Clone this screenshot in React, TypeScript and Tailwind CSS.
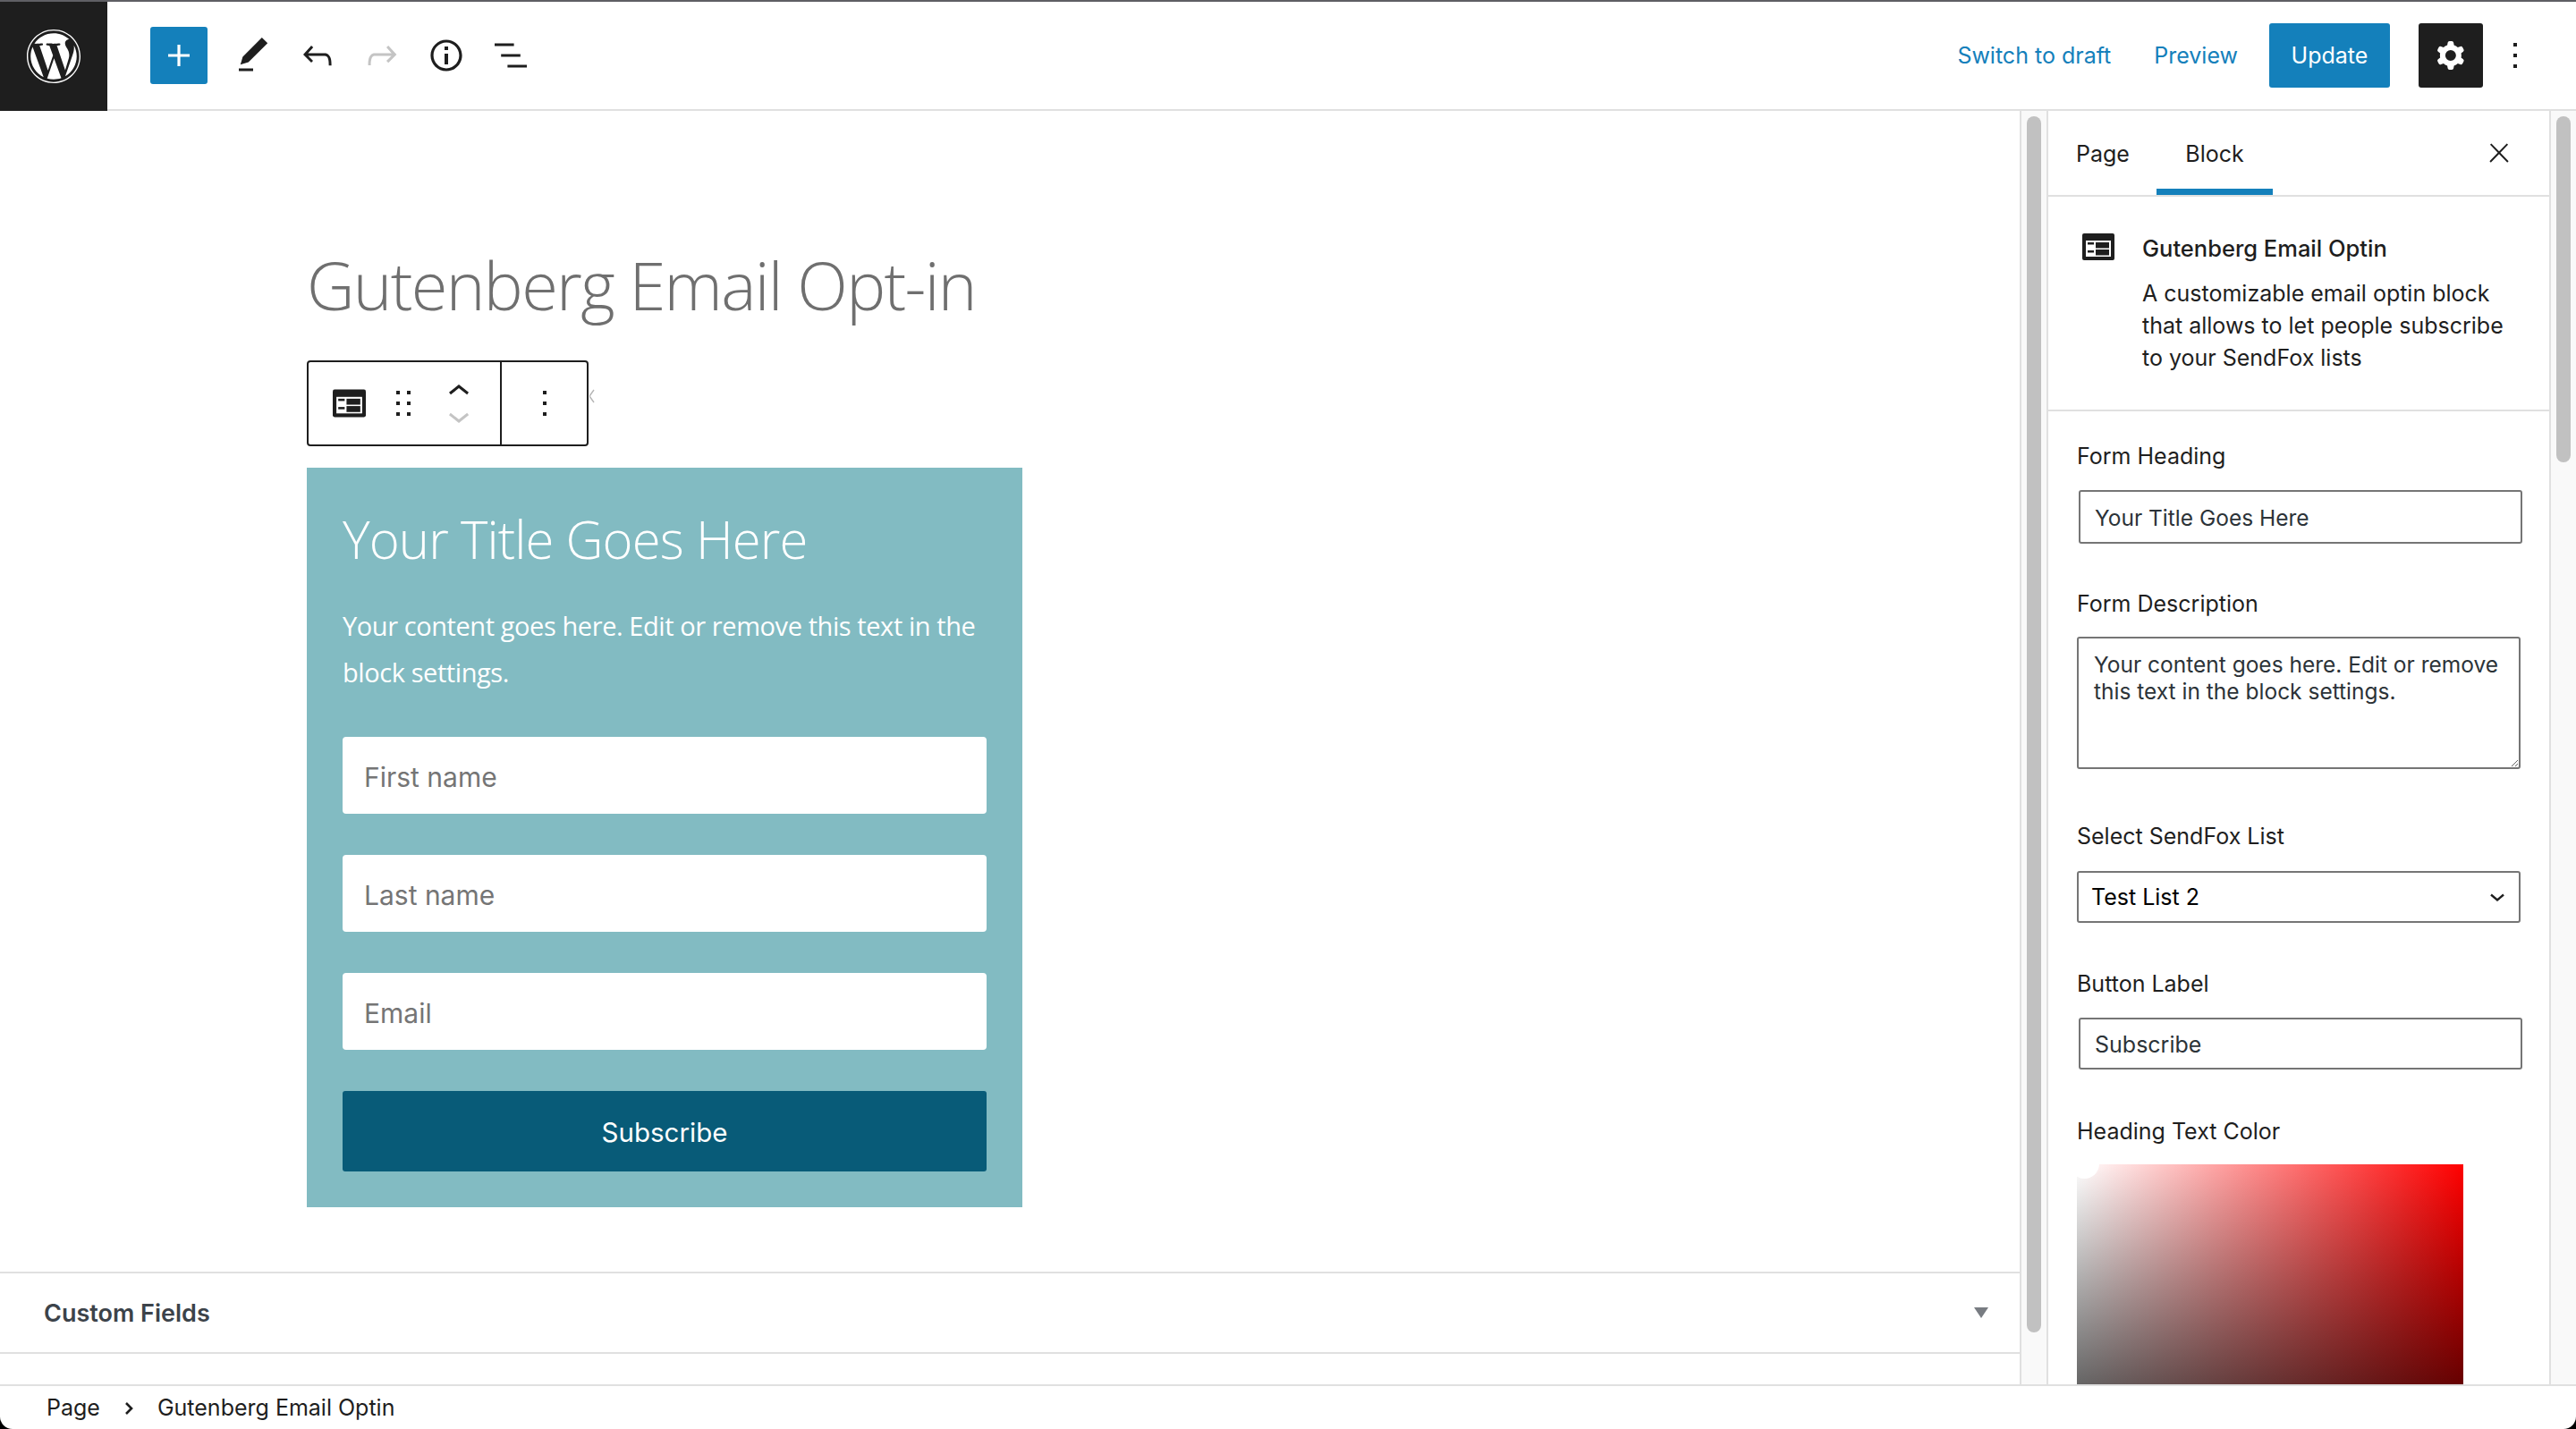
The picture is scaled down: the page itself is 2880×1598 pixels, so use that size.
import React from "react";
import { FaWordpress } from "react-icons/fa";

function Icon({ d, className }: { d: string; className?: string }) {
  return (
    <svg viewBox="0 0 24 24" fill="currentColor" className={className ?? "w-12 h-12"}>
      <path d={d} fillRule="evenodd" />
    </svg>
  );
}

const paths = {
  plus: "M18 11.2h-5.2V6h-1.6v5.2H6v1.6h5.2V18h1.6v-5.2H18z",
  pencil: "M20.1 5.1L16.9 2 6.2 12.7l-1.3 4.4 4.5-1.3L20.1 5.1zM4 20.8h8v-1.5H4v1.5z",
  undo: "M18.3 11.7c-.6-.6-1.4-.9-2.3-.9H6.7l2.9-3.3-1.1-1-4.5 5L8.5 16l1-1-2.7-2.7H16c.5 0 .9.2 1.3.5 1 1 1 3.4 1 4.5v.3h1.5v-.2c0-1.5 0-4.3-1.5-5.7z",
  redo: "M15.6 6.5l-1.1 1 2.9 3.3H8c-.9 0-1.7.3-2.3.9-1.4 1.5-1.4 4.2-1.4 5.6v.2h1.5v-.3c0-1.1 0-3.5 1-4.5.3-.3.7-.5 1.3-.5h9.2L14.5 15l1.1 1.1 4.6-4.6-4.6-5z",
  info: "M12 3.2c-4.8 0-8.8 3.9-8.8 8.8 0 4.8 3.9 8.8 8.8 8.8 4.8 0 8.8-3.9 8.8-8.8 0-4.8-4-8.8-8.8-8.8zm0 16c-4 0-7.2-3.3-7.2-7.2C4.8 8 8 4.8 12 4.8s7.2 3.3 7.2 7.2c0 4-3.2 7.2-7.2 7.2zM11 17h2v-6h-2v6zm0-8h2V7h-2v2z",
  list: "M13.8 5.2H3v1.5h10.8V5.2zm-3.6 12v1.5H21v-1.5H10.2zm7.2-6H6.6v1.5h10.8v-1.5z",
  cog: "M10.289 4.836A1 1 0 0 1 11.275 4h1.306a1 1 0 0 1 .987.836l.244 1.466c.787.26 1.503.679 2.108 1.218l1.393-.522a1 1 0 0 1 1.216.437l.653 1.13a1 1 0 0 1-.23 1.273l-1.148.944a6.025 6.025 0 0 1 0 2.435l1.149.946a1 1 0 0 1 .23 1.272l-.653 1.13a1 1 0 0 1-1.216.437l-1.394-.522c-.605.54-1.32.958-2.108 1.218l-.244 1.466a1 1 0 0 1-.987.836h-1.306a1 1 0 0 1-.986-.836l-.244-1.466a5.995 5.995 0 0 1-2.108-1.218l-1.394.522a1 1 0 0 1-1.217-.436l-.653-1.131a1 1 0 0 1 .23-1.272l1.149-.946a6.026 6.026 0 0 1 0-2.435l-1.148-.944a1 1 0 0 1-.23-1.272l.653-1.131a1 1 0 0 1 1.217-.437l1.393.522a5.994 5.994 0 0 1 2.108-1.218l.244-1.466zM14.929 12a3 3 0 1 1-6 0 3 3 0 0 1 6 0z",
  more: "M13 19h-2v-2h2v2zm0-6h-2v-2h2v2zm0-6h-2V5h2v2z",
  drag: "M8 7h2V5H8v2zm0 6h2v-2H8v2zm0 6h2v-2H8v2zm6-14v2h2V5h-2zm0 8h2v-2h-2v2zm0 6h2v-2h-2v2z",
  up: "M6.5 12.4L12 8l5.5 4.4-.9 1.2L12 10l-4.5 3.6-1-1.2z",
  down: "M17.5 11.6L12 16l-5.5-4.4.9-1.2L12 14l4.6-3.6 1 1.2z",
  close: "M13 11.8l6.1-6.3-1-1-6.1 6.2-6.1-6.2-1 1 6.1 6.3-6.5 6.7 1 1 6.5-6.6 6.5 6.6 1-1z",
};

function FormIcon({ className }: { className: string }) {
  return (
    <svg viewBox="0 0 36 30" className={className}>
      <rect width="36" height="30" rx="2" fill="#1e1e1e" />
      <rect x="4" y="8" width="28" height="18" fill="#fff" />
      <rect x="6" y="10" width="7" height="2.5" fill="#1e1e1e" />
      <rect x="6" y="19" width="7" height="2.5" fill="#1e1e1e" />
      <rect x="15" y="10" width="15" height="6.5" fill="#1e1e1e" />
      <rect x="15" y="18" width="15" height="6.5" fill="#1e1e1e" />
    </svg>
  );
}

function Scrollbar({ height }: { height: string }) {
  return (
    <div className="w-[30px] shrink-0 bg-[#f9f9f9] border-l-2 border-[#e0e0e0] pl-[6px] pt-[6px]">
      <div className={`w-[16px] rounded-[8px] bg-[#c1c1c1] ${height}`} />
    </div>
  );
}

function BlockField({ placeholder }: { placeholder: string }) {
  return (
    <input
      placeholder={placeholder}
      className="block w-[720px] h-[86px] rounded-[4px] bg-white px-[24px] pt-[3px] text-[30px] font-[Inter,sans-serif] text-[#757575] placeholder:text-[#757575] outline-none"
    />
  );
}

function Label({ children }: { children: React.ReactNode }) {
  return <div className="text-[25px] leading-[36px] text-[#1e1e1e]">{children}</div>;
}

function TextField({ value }: { value: string }) {
  return (
    <input
      readOnly
      value={value}
      className="block ml-[2px] w-[496px] h-[60px] rounded-[3px] border-2 border-[#757575] bg-white pl-[16px] pr-[17px] pt-[2px] text-[24.5px] text-[#2c3338] outline-none"
    />
  );
}

export default function App() {
  return (
    <div className="w-[2880px] h-[1598px] bg-black overflow-hidden font-[Inter,sans-serif]">
      <div className="w-full h-full flex flex-col bg-white rounded-b-[14px] overflow-hidden">
        <div className="h-[2px] shrink-0 bg-[#5f5f64]" />

        {/* Top toolbar */}
        <div className="h-[122px] shrink-0 flex">
          <div className="w-[120px] flex items-center justify-center bg-[#1e1e1e] text-white">
            <FaWordpress size={62} />
          </div>
          <div className="flex-1 flex items-center border-b-2 border-[#e0e0e0] pl-[48px] pr-[44px]">
            <div className="w-[64px] h-[64px] rounded-[3px] bg-[#1480bb] text-white flex items-center justify-center">
              <Icon d={paths.plus} />
            </div>
            <div className="ml-[27px] flex items-center gap-[24px] text-[#1e1e1e]">
              <Icon d={paths.pencil} />
              <Icon d={paths.undo} />
              <Icon d={paths.redo} className="w-12 h-12 text-[#c4c4c4]" />
              <Icon d={paths.info} />
              <Icon d={paths.list} />
            </div>
            <div className="ml-auto flex items-center text-[25px] text-[#1480bb]">
              <span className="pt-[2px]">Switch to draft</span>
              <span className="pt-[2px] ml-[48px]">Preview</span>
              <div className="ml-[35px] w-[135px] h-[72px] pt-[2px] rounded-[3px] bg-[#1480bb] text-white flex items-center justify-center">
                Update
              </div>
              <div className="ml-[32px] w-[72px] h-[72px] rounded-[3px] bg-[#1e1e1e] text-white flex items-center justify-center">
                <Icon d={paths.cog} />
              </div>
              <div className="ml-[12px] text-[#1e1e1e]">
                <Icon d={paths.more} />
              </div>
            </div>
          </div>
        </div>

        <div className="flex-1 min-h-0 flex">
          {/* Editor canvas */}
          <div className="flex-1 min-w-0 overflow-hidden">
            <div className="pl-[343px] pt-[145px]">
              <h1 className="text-[74px] leading-[100px] tracking-[-1.7px] font-light text-[#6f6f6f] font-['Open_Sans',sans-serif]">
                Gutenberg Email Opt-in
              </h1>
              <div className="relative mt-[34px] w-[315px] h-[96px] flex items-stretch rounded-[4px] border-2 border-[#1e1e1e] bg-white text-[#1e1e1e]">
                <div className="w-[216px] border-r-2 border-[#1e1e1e] flex items-center">
                  <FormIcon className="ml-[27px] w-[37px] h-[32px]" />
                  <Icon d={paths.drag} className="ml-[18px] w-12 h-12" />
                  <div className="ml-[14px] pt-[2px] flex flex-col items-center">
                    <Icon d={paths.up} className="w-12 h-12 -mb-[21px] -mt-[2px]" />
                    <Icon d={paths.down} className="w-12 h-12 text-[#c4c4c4]" />
                  </div>
                </div>
                <div className="flex-1 flex items-center justify-center">
                  <Icon d={paths.more} />
                </div>
                <svg viewBox="0 0 6 16" className="absolute left-[314px] top-[30px] w-[6px] h-[16px]" fill="none" stroke="#b5b5b5" strokeWidth="1.4">
                  <path d="M0 8 L5 1 M0 8 L5 15" />
                </svg>
              </div>

              <div className="mt-[24px] w-[800px] h-[827px] bg-[#82bbc2] pl-[40px] pt-[40px]">
                <div className="text-[58px] leading-[80px] tracking-[-0.9px] font-light text-white font-['Open_Sans',sans-serif]">
                  Your Title Goes Here
                </div>
                <p className="mt-[31px] w-[720px] text-[29px] leading-[52px] tracking-[-0.42px] text-white font-['Open_Sans',sans-serif]">
                  Your content goes here. Edit or remove this text in the block settings.
                </p>
                <div className="mt-[46px] flex flex-col gap-[46px]">
                  <BlockField placeholder="First name" />
                  <BlockField placeholder="Last name" />
                  <BlockField placeholder="Email" />
                  <div className="w-[720px] h-[90px] pt-[2px] rounded-[3px] bg-[#085b78] text-white text-[29.5px] flex items-center justify-center">
                    Subscribe
                  </div>
                </div>
              </div>
            </div>

            <div className="mt-[72px] h-[92px] border-y-2 border-[#e0e0e0] flex items-center justify-between pl-[49px] pr-[35px]">
              <span className="pt-[2px] text-[27px] font-semibold text-[#3c434a]">Custom Fields</span>
              <div className="w-0 h-0 border-x-[8px] border-x-transparent border-t-[12px] border-t-[#787c82]" />
            </div>
          </div>

          <Scrollbar height="h-[1360px]" />

          {/* Settings sidebar */}
          <div className="w-[560px] shrink-0 border-l-2 border-[#e0e0e0] box-content overflow-hidden">
            <div className="h-[96px] flex border-b-2 border-[#e0e0e0] text-[25px] text-[#1e1e1e]">
              <div className="w-[121px] pl-[31px] pt-[3px] flex items-center">Page</div>
              <div className="w-[130px] flex items-center justify-center border-b-[7px] border-[#1480bb] pt-[10px]">Block</div>
              <div className="ml-auto mr-[39px] flex items-center">
                <Icon d={paths.close} className="w-[34px] h-[34px]" />
              </div>
            </div>

            <div className="h-[240px] border-b-2 border-[#e0e0e0] flex pl-[38px] pt-[40px] text-[25px] leading-[36px] text-[#1e1e1e]">
              <FormIcon className="w-[36px] h-[32px]" />
              <div className="ml-[31px]">
                <div className="font-medium text-[25.5px]">Gutenberg Email Optin</div>
                <p className="mt-[14px] w-[420px]">A customizable email optin block that allows to let people subscribe to your SendFox lists</p>
              </div>
            </div>

            <div className="pl-[32px] pt-[32px]">
              <Label>Form Heading</Label>
              <div className="mt-[20px]">
                <TextField value="Your Title Goes Here" />
              </div>
              <div className="mt-[49px]">
                <Label>Form Description</Label>
              </div>
              <textarea
                readOnly
                value="Your content goes here. Edit or remove this text in the block settings."
                className="block mt-[19px] w-[496px] h-[148px] rounded-[3px] border-2 border-[#757575] bg-white pl-[17px] pr-[6px] py-[14px] text-[24.5px] leading-[30px] text-[#2c3338] outline-none"
              />
              <div className="mt-[57px]">
                <Label>Select SendFox List</Label>
              </div>
              <div className="mt-[21px] w-[496px] h-[58px] pt-[2px] rounded-[3px] border-2 border-[#757575] flex items-center justify-between pl-[14px] pr-[16px] text-[25px] text-black">
                Test List 2
                <svg viewBox="0 0 16 10" className="w-[16px] h-[10px]" fill="none" stroke="#1e1e1e" strokeWidth="2.4">
                  <path d="M1 1.5 L8 7.5 L15 1.5" />
                </svg>
              </div>
              <div className="mt-[50px]">
                <Label>Button Label</Label>
              </div>
              <div className="mt-[20px]">
                <input
                  readOnly
                  value="Subscribe"
                  className="block ml-[2px] w-[496px] h-[58px] rounded-[3px] border-2 border-[#757575] bg-white pl-[16px] pr-[17px] pt-[2px] text-[25px] text-[#2c3338] outline-none"
                />
              </div>
              <div className="mt-[51px]">
                <Label>Heading Text Color</Label>
              </div>
              <div className="relative mt-[19px] w-[432px] h-[410px] bg-[linear-gradient(to_top,#000,transparent),linear-gradient(to_right,#fff,#f00)]">
                <div className="absolute -left-[8px] -top-[17px] w-[33px] h-[33px] rounded-full bg-white" />
              </div>
            </div>
          </div>

          <Scrollbar height="h-[387px]" />
        </div>

        {/* Breadcrumb footer */}
        <div className="h-[50px] shrink-0 border-t-2 border-[#e0e0e0] flex items-center pl-[52px] pt-[2px] text-[25px] text-[#1e1e1e]">
          <span>Page</span>
          <svg viewBox="0 0 10 16" className="ml-[27px] w-[10px] h-[16px]" fill="none" stroke="#1e1e1e" strokeWidth="2.6">
            <path d="M2 2 L8 8 L2 14" />
          </svg>
          <span className="ml-[27px]">Gutenberg Email Optin</span>
        </div>
      </div>
    </div>
  );
}
